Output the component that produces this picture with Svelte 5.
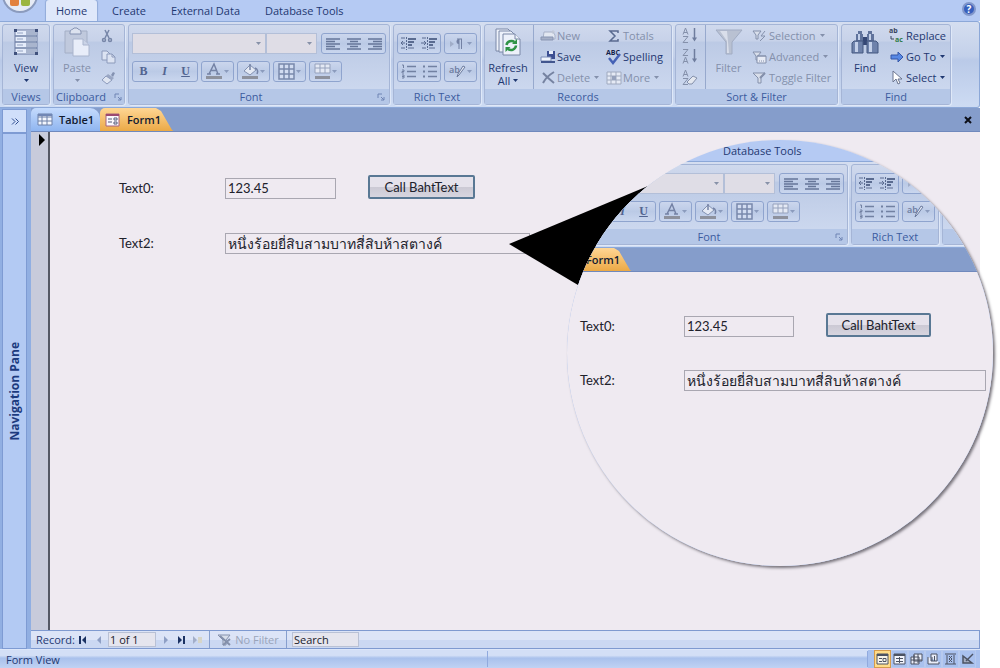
<script lang="ts">
	const ribbonTabs = ['Home', 'Create', 'External Data', 'Database Tools']
	const views = ['form', 'datasheet', 'pivot', 'chart', 'layout', 'design']

	let activeTab = $state('Home')
	let activeView = $state('form')
	let amount = $state('123.45')
	let bahtText = $state('หนึ่งร้อยยี่สิบสามบาทสี่สิบห้าสตางค์')
	let record = $state('1 of 1')
	let search = $state('Search')
</script>

{#snippet caret()}
	<svg class="caret" width="5" height="3" viewBox="0 0 5 3" aria-hidden="true"><path d="M0 0h5L2.5 3z" fill="currentColor" /></svg>
{/snippet}

{#snippet glyph(name: string)}
	{#if name === 'view'}
		<svg width="26" height="28" viewBox="0 0 26 28" fill="none">
			<path d="M2 2h22v24H2z" fill="#e6edfb" stroke="#6b7ba1" />
			<path d="M13 3h10v4H13zm0 6h10v4H13zm0 6h10v4H13zm0 6h10v4H13z" fill="#a9b5ce" />
			<path d="M2 8h22M2 14h22M2 20h22" stroke="#7182a8" stroke-width="1.5" />
			<path d="M4 5h6M4 11h6M4 17h6M4 23h6" stroke="#94a3c2" />
			<path d="M1 1h3v3H1zm21 0h3v3h-3zM1 24h3v3H1zm21 0h3v3h-3z" fill="#40517c" />
		</svg>
	{:else if name === 'paste'}
		<svg width="26" height="30" viewBox="0 0 26 30">
			<path d="M1 4h22v22H1z" fill="#c0c9dd" stroke="#a4afc6" />
			<path d="M6 5c0-3 3-2 4-4h3c1 2 4 1 4 4v2H6z" fill="#dce2ef" stroke="#8492b2" />
			<path d="M9 12h10l6 6v11H9z" fill="#e8edf9" stroke="#aab5ce" />
			<path d="M19 12v6h6" fill="#cbd4e7" stroke="#aab5ce" />
		</svg>
	{:else if name === 'cut'}
		<svg width="14" height="14" viewBox="0 0 14 14" fill="none" stroke="#7786a8" stroke-width="1.5">
			<path d="M5 1l4 8M9 1L5 9" /><circle cx="4" cy="11" r="1.5" /><circle cx="10" cy="11" r="1.5" />
		</svg>
	{:else if name === 'copy'}
		<svg width="16" height="14" viewBox="0 0 16 14" fill="#dce3f2" stroke="#8c9abb">
			<path d="M2 1h5l3 3v6H2z" /><path d="M7 4h5l3 3v6H7z" /><path d="M12 4v3h3" fill="none" />
		</svg>
	{:else if name === 'painter'}
		<svg width="16" height="14" viewBox="0 0 16 14">
			<path d="M11 4l2-3 2 1-2 4z" fill="#8492b2" /><path d="M8 3l6 4-2 2-6-4z" fill="#9aa7c4" /><path d="M6 5l6 4-5 4-5-4z" fill="#dfe5f1" stroke="#8c9abb" />
		</svg>
	{:else if name.startsWith('align')}
		<svg width="16" height="14" viewBox="0 0 16 14" stroke="#667699" stroke-width="1.5" fill="none">
			{#if name === 'align-left'}
				<path d="M1 2h14M1 4.5h9M1 7h14M1 9.5h9M1 12h14" />
			{:else if name === 'align-center'}
				<path d="M1 2h14M4 4.5h8M1 7h14M4 9.5h8M1 12h14" />
			{:else}
				<path d="M1 2h14M6 4.5h9M1 7h14M6 9.5h9M1 12h14" />
			{/if}
		</svg>
	{:else if name === 'outdent' || name === 'indent'}
		<svg width="17" height="15" viewBox="0 0 17 15" stroke="#5a6b90" fill="none">
			<path stroke-width="2" d="M8 3h8M8 6h6M8 9h4" /><path d="M8 12h6M1 2h4M1 12h4" />
			<path d="M6.5 1v13" stroke-dasharray="2 1" />
			<path d={name === 'outdent' ? 'M5 7H1M3 5L1 7l2 2' : 'M0 7h5M3 5l2 2-2 2'} />
		</svg>
	{:else if name === 'numbers' || name === 'bullets'}
		<svg width="16" height="15" viewBox="0 0 16 15" stroke="#7281a2" fill="none">
			<path stroke-width="1.5" d="M6 2.5h9M6 7.5h9M6 12.5h9" />
			{#if name === 'numbers'}
				<path d="M1 1h1.500v3M1 6h2v1.500H1V9h2M1 11h2v3H1M1 12.500h2" />
			{:else}
				<path stroke-width="2" d="M1 2.500h2M1 7.500h2M1 12.500h2" />
			{/if}
		</svg>
	{:else if name === 'paragraph'}
		<svg width="15" height="12" viewBox="0 0 15 12">
			<path d="M1 3l4 3-4 3z" fill="#a0adc8" /><path d="M8 1h5M10 1v10M12.500 1v10" stroke="#7381a4" /><path d="M10 1a2.500 2.500 0 000 5z" fill="#7381a4" />
		</svg>
	{:else if name === 'highlight'}
		<svg width="18" height="14" viewBox="0 0 18 14">
			<text x="0" y="8" font-size="9" font-weight="600" fill="#6c7b9e">ab</text><path d="M16 2l-6 8-2 2 1-3 5-8z" fill="#e3e9f5" stroke="#6c7b9e" />
		</svg>
	{:else if name === 'font-color'}
		<svg width="16" height="17" viewBox="0 0 16 17">
			<path d="M3 11L8 1l4 10M5 7.500h6M1 11h4M10 11h4" stroke="#7482a5" stroke-width="1.500" fill="none" /><path d="M0 13h16v3H0z" fill="#8d919d" />
		</svg>
	{:else if name === 'fill'}
		<svg width="17" height="17" viewBox="0 0 17 17">
			<path d="M8 2l6 5-6 5-6-4z" fill="#e4e9f4" stroke="#8391b0" /><path d="M8 7V1M13 5c3 1 3 4 2 6" stroke="#7482a5" stroke-width="1.500" fill="none" /><path d="M0 13h16v3H0z" fill="#8d919d" />
		</svg>
	{:else if name === 'grid'}
		<svg width="17" height="17" viewBox="0 0 17 17"><path d="M1 1h15v15H1zM6 1v15M11 1v15M1 6h15M1 11h15" stroke="#7989ac" stroke-width="1.500" fill="#d2dcf1" /></svg>
	{:else if name === 'alternate'}
		<svg width="17" height="17" viewBox="0 0 17 17"><path d="M1 1h15v9H1zM6 1v9M11 1v9M1 5h15" stroke="#96a2bd" fill="#e4e9f4" /><path d="M1 13h15v3H1z" fill="#8d919d" /></svg>
	{:else if name === 'refresh'}
		<svg width="26" height="30" viewBox="0 0 26 30" fill="#edf1fa" stroke="#7a88a7">
			<path d="M1 2h12l3 3v19H1z" /><path d="M4 4h12l4 4v17H4z" /><path d="M8 7h12l5 5v16H8z" /><path d="M20 7v5h5" />
			<g fill="none" stroke="#2f9346" stroke-width="2.500"><path d="M11.500 18a5 5 0 018-3" /><path d="M21 18.500a5 5 0 01-8 3.500" /></g>
			<path d="M22 12v5h-5zM10.500 25v-5h5z" fill="#2f9346" stroke="none" />
		</svg>
	{:else if name === 'new'}
		<svg width="16" height="13" viewBox="0 0 16 13"><path d="M4 3h9l2 3v4H3z" fill="#e2e7f1" stroke="#a7b1c7" /><path d="M1 8h12v3H1z" fill="#a6b0c7" stroke="#8794b2" /><path d="M13 1v4M11 3h4" stroke="#c0c7d6" /></svg>
	{:else if name === 'save'}
		<svg width="16" height="14" viewBox="0 0 16 14"><path d="M7 1h8v8H7z" fill="#3c4f92" /><path d="M9 1h4v3H9z" fill="#e8eefb" /><path d="M1 7h10v4H1z" fill="#f0f4fc" stroke="#7b8cb7" /><path d="M1 11h14v2H1z" fill="#42568e" /></svg>
	{:else if name === 'delete'}
		<svg width="16" height="14" viewBox="0 0 16 14"><path d="M3 2c3 3 6 6 11 10M14 1C9 4 5 8 3 12" stroke="#7683a1" stroke-width="2" fill="none" /></svg>
	{:else if name === 'totals'}
		<svg width="16" height="14" viewBox="0 0 16 14"><path d="M12 4V2H4l5 5-5 5h8v-2" stroke="#596a90" stroke-width="1.500" fill="none" /></svg>
	{:else if name === 'spelling'}
		<svg width="16" height="16" viewBox="0 0 16 16"><text x="0" y="6" font-size="7" font-weight="700" fill="#16234b">ABC</text><path d="M3 9l4 5 7-9" stroke="#4461b5" stroke-width="2.500" fill="none" /></svg>
	{:else if name === 'more'}
		<svg width="16" height="14" viewBox="0 0 16 14"><path d="M1 1h14v12H1zM5 1v12M10 1v12M1 5h14M1 9h14" stroke="#a0aabf" fill="#e5eaf5" /><path d="M6 5h4v4H6z" fill="#96a2bd" /></svg>
	{:else if name === 'sort-asc' || name === 'sort-desc' || name === 'clear-sort'}
		<svg width="16" height="17" viewBox="0 0 16 17" fill="none" stroke="#8490aa">
			<path d={name === 'sort-desc' ? 'M1 1.500h5L1 7.500h5M1 15.500L3.500 9 6 15.500M2 13.500h3' : 'M1 7.500L3.500 1 6 7.500M2 5.500h3M1 9.500h5l-5 6h5'} />
			{#if name === 'clear-sort'}
				<path d="M5 13l6-6 4 2-5 6H7z" fill="#e3e7ef" />
			{:else}
				<path d="M12.500 1v11" stroke="#6e7c9d" stroke-width="1.500" /><path d="M10 10.500h5l-2.500 4z" fill="#6e7c9d" stroke="none" />
			{/if}
		</svg>
	{:else if name === 'filter'}
		<svg width="28" height="28" viewBox="0 0 28 28"><path d="M1 2h26L17 14v12h-6V14z" fill="#b9c1d2" stroke="#a1acc3" /><path d="M5 3h7l2 22h-2V13z" fill="#d9deea" /></svg>
	{:else if name === 'selection' || name === 'advanced' || name === 'toggle' || name === 'no-filter'}
		<svg width="15" height="14" viewBox="0 0 15 14" stroke="#8490ab">
			{#if name === 'toggle' || name === 'no-filter'}
				<path d="M1 2h12L9 7v5H6V7z" fill="#d8deea" />
				{#if name === 'no-filter'}<path d="M3 3l10 9M13 6l-7 6" stroke-width="2" />{:else}<path d="M8 7l5-5" stroke-width="2" />{/if}
			{:else}
				<path d="M1 2h8L6 6v4H4V6z" fill="#d8deea" />
				{#if name === 'selection'}<path d="M13 2l-4 5h4l-5 5" fill="none" />{:else}<path d="M5 6h9v7H5z" fill="#e7ebf5" /><path d="M5 6h9M7 11h1m1 0h1m1 0h1" />{/if}
			{/if}
		</svg>
	{:else if name === 'find'}
		<svg width="28" height="26" viewBox="0 0 28 26">
			<path d="M7 2h4v3H7zm10 0h4v3h-4zM5 5h7v7H5zm11 0h7v7h-7z" fill="#60739c" /><path d="M12 8h4v8h-4z" fill="#344775" />
			<path d="M3 12h9v12H1V14zm13 0h9l2 2v10H16z" fill="#6e82ab" stroke="#445880" />
			<path d="M4 13h3v10H4zm14 0h3v10h-3zM7 5h2v6H7zm11 0h2v6h-2z" fill="#c3d0e9" />
		</svg>
	{:else if name === 'replace'}
		<svg width="16" height="15" viewBox="0 0 16 15"><text x="0" y="5" font-size="7" font-weight="700" fill="#38445f">ab</text><text x="6" y="14" font-size="7" font-weight="700" fill="#2d7a46">ac</text><path d="M2 8v3h3" stroke="#38445f" fill="none" /></svg>
	{:else if name === 'goto'}
		<svg width="16" height="12" viewBox="0 0 16 12"><path d="M2 4h7V1l5 5-5 5V8H2z" fill="#5788e4" stroke="#3457a8" /></svg>
	{:else if name === 'select'}
		<svg width="16" height="15" viewBox="0 0 16 15"><path d="M4 1v11l3-3 2 5 2-1-2-4h4z" fill="#fff" stroke="#6b7590" /></svg>
	{:else if name === 'launcher'}
		<svg width="8" height="8" viewBox="0 0 8 8" fill="none" stroke="#6f84b4"><path d="M1 5V1h4M4 4l3 3M7 4v3H4" /></svg>
	{:else if name === 'table'}
		<svg width="16" height="13" viewBox="0 0 16 13"><path d="M1 1h14v11H1zM5 1v11M10 1v11M1 4h14M1 8h14" fill="#f3f6fd" stroke="#6c80a8" /><path d="M1 1h14v2H1z" fill="#7187b5" /></svg>
	{:else if name === 'form-doc'}
		<svg width="15" height="14" viewBox="0 0 15 14"><path d="M1 1h13v12H1z" fill="#fbf8fb" stroke="#a7627f" /><path d="M1 1h13v2H1z" fill="#9c4870" /><path d="M3 6h4M3 9h4" stroke="#555b7b" /><path d="M9 5h3v2H9zm0 4h3v2H9z" fill="#fff" stroke="#555b7b" /></svg>
	{:else if name === 'help'}
		<svg width="14" height="14" viewBox="0 0 14 14"><circle cx="7" cy="7" r="6" fill="#375fbd" stroke="#8297ca" stroke-width="2" /><text x="7" y="11" font-size="10" font-weight="700" text-anchor="middle" fill="#fff">?</text></svg>
	{:else if name === 'first' || name === 'last'}
		<svg width="8" height="8" viewBox="0 0 8 8" fill="#1b3263"><path d={name === 'first' ? 'M0 0h2v8H0zM7 0v8L3 4z' : 'M6 0h2v8H6zM1 0v8l4-4z'} /></svg>
	{:else if name === 'prev' || name === 'next'}
		<svg width="5" height="8" viewBox="0 0 5 8" fill="#8e9fc5"><path d={name === 'prev' ? 'M4 0v8L0 4z' : 'M1 0v8l4-4z'} /></svg>
	{:else if name === 'new-record'}
		<svg width="9" height="8" viewBox="0 0 9 8"><path d="M0 0v8l4-4z" fill="#a2aec9" /><path d="M5 1h4v6H5z" fill="#d6d5c8" /></svg>
	{:else}
		<svg width="13" height="12" viewBox="0 0 13 12" fill="none" stroke="#4c5363">
			{#if name === 'form'}
				<path d="M1 1h11v10H1z" fill="#f8f4e9" /><path d="M1 2h11" stroke-width="2" /><path d="M3 5.500h3M3 8.500h3M7 5.500h3v3H7z" />
			{:else if name === 'datasheet'}
				<path d="M1 1h11v10H1z" fill="#f1f4fc" /><path d="M1 2h11" stroke-width="2" /><path d="M3 5.500h7M3 8.500h7M6.500 4v6" />
			{:else if name === 'pivot'}
				<path d="M4 1h8v7H4zM1 4h8v7H1z" fill="#e9edf8" /><path d="M4 2v9M1 7h11M8 1v9" />
			{:else if name === 'chart'}
				<path d="M4 1h6v7H4zM1 4v7h11V9" fill="#e9edf8" /><path d="M5 8V4M7.500 8V3" />
			{:else if name === 'layout'}
				<path d="M1 1h11M1 11h11M3 2v9M10 2v9M5 3l3 3-3 3M8 3L5 6l3 3" />
			{:else}
				<path d="M2 3v7h9z" fill="#a4adc2" stroke-width="1.500" /><path d="M5 8l7-7" stroke-width="1.500" />
			{/if}
		</svg>
	{/if}
{/snippet}

{#snippet command(icon: string, label: string, menu = false, disabled = false)}
	<button class="command" type="button" {disabled}>
		<span class="icon">{@render glyph(icon)}</span>
		{label}
		{#if menu}{@render caret()}{/if}
	</button>
{/snippet}

{#snippet tool(icon: string, label: string)}
	<button class="split" type="button" aria-label={label}>
		{@render glyph(icon)}
		{@render caret()}
	</button>
{/snippet}

{#snippet tabBar()}
	<nav class="tabs" aria-label="Ribbon">
		<button class="office" type="button" aria-label="Office menu"><span></span><span></span><span></span><span></span></button>
		{#each ribbonTabs as tab (tab)}
			<button class="tab" class:active={tab === activeTab} type="button" onclick={() => (activeTab = tab)}>{tab}</button>
		{/each}
		<button class="help" type="button" aria-label="Help">{@render glyph('help')}</button>
	</nav>
{/snippet}

{#snippet textGroups()}
	<section class="group font">
		<div class="body rows">
			<div class="row">
				<div class="combos">
					<div class="combo family"><select aria-label="Font"><option></option></select>{@render caret()}</div>
					<div class="combo size"><select aria-label="Font size"><option></option></select>{@render caret()}</div>
				</div>
				<div class="set">
					<button type="button" aria-label="Align left">{@render glyph('align-left')}</button>
					<button type="button" aria-label="Center">{@render glyph('align-center')}</button>
					<button type="button" aria-label="Align right">{@render glyph('align-right')}</button>
				</div>
			</div>
			<div class="row">
				<div class="set letters">
					<button type="button"><b>B</b></button>
					<button type="button"><i>I</i></button>
					<button type="button"><u>U</u></button>
				</div>
				{@render tool('font-color', 'Font color')}
				{@render tool('fill', 'Fill color')}
				{@render tool('grid', 'Gridlines')}
				{@render tool('alternate', 'Alternate row color')}
			</div>
		</div>
		<h2>Font <span class="launcher">{@render glyph('launcher')}</span></h2>
	</section>
	<section class="group rich">
		<div class="body rows">
			<div class="row">
				<div class="set">
					<button type="button" aria-label="Decrease list level">{@render glyph('outdent')}</button>
					<button type="button" aria-label="Increase list level">{@render glyph('indent')}</button>
				</div>
				{@render tool('paragraph', 'Text direction')}
			</div>
			<div class="row">
				<div class="set">
					<button type="button" aria-label="Numbering">{@render glyph('numbers')}</button>
					<button type="button" aria-label="Bullets">{@render glyph('bullets')}</button>
				</div>
				{@render tool('highlight', 'Highlight color')}
			</div>
		</div>
		<h2>Rich Text</h2>
	</section>
{/snippet}

{#snippet documentArea(prefix: string)}
	<div class="doc-tabs">
		<button class="doc-tab" type="button">{@render glyph('table')} Table1</button>
		<button class="doc-tab current" type="button">{@render glyph('form-doc')} Form1</button>
		<button class="close" type="button" aria-label="Close">
			<svg width="8" height="8" viewBox="0 0 8 8"><path d="M1 1l6 6M7 1L1 7" stroke="#0c0f18" stroke-width="2" /></svg>
		</button>
	</div>
	<div class="sheet">
		<div class="selector"><svg width="7" height="12" viewBox="0 0 7 12"><path d="M1 0l6 6-6 6z" fill="#000" /></svg></div>
		<form class="form" onsubmit={(e) => e.preventDefault()}>
			<label for="{prefix}-text0">Text0:</label>
			<input id="{prefix}-text0" bind:value={amount} />
			<button class="call" type="submit">Call BahtText</button>
			<label for="{prefix}-text2">Text2:</label>
			<input class="wide" id="{prefix}-text2" bind:value={bahtText} />
		</form>
	</div>
{/snippet}

<div class="page">
	<div class="window">
		{@render tabBar()}
		<div class="ribbon">
			<section class="group views">
				<div class="body">
					<button class="big" type="button">{@render glyph('view')}<span>View</span>{@render caret()}</button>
				</div>
				<h2>Views</h2>
			</section>
			<section class="group clipboard">
				<div class="body">
					<button class="big" type="button" disabled>{@render glyph('paste')}<span>Paste</span>{@render caret()}</button>
					<div class="stack">
						<button class="mini" type="button" aria-label="Cut">{@render glyph('cut')}</button>
						<button class="mini" type="button" aria-label="Copy">{@render glyph('copy')}</button>
						<button class="mini" type="button" aria-label="Format Painter">{@render glyph('painter')}</button>
					</div>
				</div>
				<h2>Clipboard <span class="launcher">{@render glyph('launcher')}</span></h2>
			</section>
			{@render textGroups()}
			<section class="group records">
				<div class="body">
					<button class="big" type="button">{@render glyph('refresh')}<span>Refresh</span><span>All {@render caret()}</span></button>
					<div class="stack divided">
						{@render command('new', 'New', false, true)}
						{@render command('save', 'Save')}
						{@render command('delete', 'Delete', true, true)}
					</div>
					<div class="stack">
						{@render command('totals', 'Totals', false, true)}
						{@render command('spelling', 'Spelling')}
						{@render command('more', 'More', true, true)}
					</div>
				</div>
				<h2>Records</h2>
			</section>
			<section class="group sort">
				<div class="body">
					<div class="stack">
						<button class="mini" type="button" aria-label="Ascending">{@render glyph('sort-asc')}</button>
						<button class="mini" type="button" aria-label="Descending">{@render glyph('sort-desc')}</button>
						<button class="mini" type="button" aria-label="Clear all sorts">{@render glyph('clear-sort')}</button>
					</div>
					<button class="big divided" type="button" disabled>{@render glyph('filter')}<span>Filter</span></button>
					<div class="stack">
						{@render command('selection', 'Selection', true, true)}
						{@render command('advanced', 'Advanced', true, true)}
						{@render command('toggle', 'Toggle Filter', false, true)}
					</div>
				</div>
				<h2>Sort &amp; Filter</h2>
			</section>
			<section class="group find">
				<div class="body">
					<button class="big" type="button">{@render glyph('find')}<span>Find</span></button>
					<div class="stack">
						{@render command('replace', 'Replace')}
						{@render command('goto', 'Go To', true)}
						{@render command('select', 'Select', true)}
					</div>
				</div>
				<h2>Find</h2>
			</section>
		</div>
		<div class="workspace">
			<aside class="nav-pane">
				<button class="expand" type="button" aria-label="Open navigation pane">
					<svg width="8" height="7" viewBox="0 0 8 7" fill="none" stroke="#2e4c8f"><path d="M1 0.500l3 3-3 3M4.500 0.500l3 3-3 3" /></svg>
				</button>
				<div class="nav-title"><span>Navigation Pane</span></div>
			</aside>
			<main>
				{@render documentArea('main')}
				<div class="record-bar">
					<label for="record">Record:</label>
					<button type="button" aria-label="First record">{@render glyph('first')}</button>
					<button type="button" aria-label="Previous record">{@render glyph('prev')}</button>
					<input id="record" class="position" bind:value={record} />
					<button type="button" aria-label="Next record">{@render glyph('next')}</button>
					<button type="button" aria-label="Last record">{@render glyph('last')}</button>
					<button type="button" aria-label="New record">{@render glyph('new-record')}</button>
					<button class="no-filter" type="button" disabled>{@render glyph('no-filter')} No Filter</button>
					<input class="search" aria-label="Search" bind:value={search} />
				</div>
			</main>
		</div>
		<footer>
			<span class="status">Form View</span>
			<span class="status-space"></span>
			<div class="view-switch">
				{#each views as view (view)}
					<button class:on={view === activeView} type="button" aria-label={view} onclick={() => (activeView = view)}>{@render glyph(view)}</button>
				{/each}
			</div>
		</footer>
	</div>

	<svg class="pointer" width="140" height="100" viewBox="0 0 140 100" aria-hidden="true"><path d="M0 58L139 0 100 80 69 99z" /></svg>
	<div class="lens" inert>
		<div class="lens-view">
			<nav class="tabs"><button class="tab" type="button">Database Tools</button></nav>
			<div class="ribbon">
				{@render textGroups()}
				<section class="group records"><div class="body"></div><h2></h2></section>
			</div>
			<div class="workspace">
				<main>{@render documentArea('lens')}</main>
			</div>
		</div>
	</div>
</div>

<style>
	:global(body) {
		margin: 0;
		background: #fff;
	}
	.page {
		position: relative;
		min-height: 100vh;
		padding-right: 20px;
		box-sizing: border-box;
		overflow: hidden;
		font: 11px/13px 'Open Sans', 'Noto Sans', sans-serif;
		color: #1f3871;
	}
	.page :where(*) {
		box-sizing: border-box;
	}
	svg {
		display: block;
		flex: none;
		overflow: visible;
	}
	button {
		display: flex;
		align-items: center;
		padding: 0;
		border: 0;
		background: none;
		font: inherit;
		color: inherit;
		white-space: nowrap;
	}
	input,
	select {
		min-width: 0;
		font: inherit;
	}
	.window {
		display: flex;
		flex-direction: column;
		height: 100vh;
	}
	.tabs {
		display: flex;
		flex: none;
		height: 21px;
		background: #b5caf3;
		overflow: hidden;
	}
	.office {
		display: grid;
		grid-template-columns: 9px 9px;
		grid-template-rows: 9px 9px;
		align-items: stretch;
		place-content: end center;
		gap: 2px;
		width: 36px;
		height: 36px;
		margin: -23px 8px 0 2px;
		padding-bottom: 5px;
		border: 2px solid #8b9bbd;
		border-radius: 50%;
		background: #e6ebf5;
	}
	.office span {
		border-radius: 2px;
		background: #e77b37;
	}
	.office span:nth-child(2) {
		background: #6cac43;
	}
	.office span:nth-child(3) {
		background: #e2813c;
	}
	.office span:nth-child(4) {
		background: #9bb53f;
	}
	.tab {
		height: 21px;
		margin-right: 5px;
		padding: 0 10px;
		border-radius: 3px 3px 0 0;
	}
	.tab.active {
		background: #dfe8fa;
		box-shadow: 0 0 1px 1px #92abd9;
	}
	.help {
		margin: -3px 4px 0 auto;
	}
	.ribbon {
		display: flex;
		flex: none;
		gap: 3px;
		height: 87px;
		padding: 2px 2px 3px;
		border: 1px solid #8ca8d8;
		border-width: 1px 1px 1px 0;
		border-radius: 0 3px 3px 0;
		background: linear-gradient(#d5def0, #c4d1ea 40%, #bacae8 45%, #cddbf3);
	}
	.group {
		display: flex;
		flex-direction: column;
		flex: none;
		height: 81px;
		border: 1px solid #a5b5d6;
		border-radius: 3px;
		background: linear-gradient(#cfd9ed, #c7d2e9 20%, #bccae5 22%, #cbd7ee 80%);
		box-shadow: 1px 1px 0 #dfe8f8;
	}
	.views {
		width: 48px;
	}
	.clipboard {
		width: 72px;
	}
	.font {
		width: 262px;
	}
	.rich {
		width: 88px;
	}
	.records {
		width: 188px;
	}
	.sort {
		width: 163px;
	}
	.find {
		width: 110px;
	}
	.group h2 {
		display: flex;
		align-items: center;
		justify-content: center;
		height: 15px;
		margin: 0;
		background: #b5c7e7;
		font-size: 11px;
		font-weight: 400;
		color: #3c5c9f;
	}
	.launcher {
		margin-left: 8px;
	}
	.font h2::before {
		content: '';
		flex: 1;
	}
	.font .launcher {
		display: flex;
		flex: 1;
		justify-content: flex-end;
		margin: 0 4px 0 12px;
	}
	.body {
		display: flex;
		height: 64px;
	}
	.rows {
		flex-direction: column;
		gap: 7px;
		padding: 8px 3px 0;
	}
	.row {
		display: flex;
		gap: 3px;
	}
	.big {
		flex-direction: column;
		width: 46px;
		padding-top: 2px;
	}
	.big > svg:first-child {
		height: 30px;
		margin-bottom: 4px;
	}
	.big > span {
		display: flex;
		align-items: center;
		gap: 3px;
		height: 13px;
	}
	.big > .caret {
		margin-top: 5px;
	}
	.big:disabled,
	.command:disabled {
		color: #8490ab;
	}
	.stack {
		display: flex;
		flex-direction: column;
	}
	.mini,
	.command {
		height: 21px;
	}
	.icon {
		display: flex;
		justify-content: center;
		width: 17px;
		margin-right: 1px;
	}
	.command .caret {
		margin-left: 4px;
	}
	.divided {
		border-left: 1px solid #97a9cd;
	}
	.stack.divided {
		width: 72px;
		margin-left: 2px;
		padding-left: 5px;
	}
	.sort .stack:first-child {
		padding: 0 7px 0 6px;
	}
	.combos {
		display: flex;
		margin-right: 1px;
	}
	.combo {
		display: flex;
		align-items: center;
		height: 21px;
		padding-right: 4px;
		border: 1px solid #b3bfd8;
		background: #dfdde6;
		color: #8791a8;
	}
	.combo select {
		flex: 1;
		border: 0;
		background: none;
		appearance: none;
	}
	.family {
		width: 134px;
	}
	.size {
		width: 51px;
	}
	.set,
	.split {
		height: 21px;
		border: 1px solid #8fa4ce;
		border-radius: 3px;
		background: linear-gradient(#cbd6ed, #bbcae6 50%, #c9d6ee);
	}
	.set {
		display: flex;
	}
	.set button {
		justify-content: center;
		width: 21px;
	}
	.letters {
		width: 66px;
		font: 700 12px/15px 'Liberation Serif', serif;
		color: #526490;
	}
	.split {
		justify-content: space-between;
		width: 33px;
		padding: 0 4px;
		color: #8b9bbd;
	}
	.doc-tabs {
		display: flex;
		flex: none;
		height: 24px;
		background: #859dcb;
		border-bottom: 1px solid #7089bd;
	}
	.doc-tab {
		gap: 6px;
		width: 69px;
		padding-left: 6px;
		border-radius: 5px 10px 0 0;
		background: linear-gradient(#c5dbfd, #8fb5f0);
		font-weight: 600;
		color: #111a30;
	}
	.doc-tab.current {
		gap: 7px;
		width: 75px;
		padding-left: 5px;
		background: linear-gradient(#ffd694, #eba946);
		clip-path: polygon(0 0, 56px 0, 61px 3px, 72px 22px, 75px 24px, 0 24px);
	}
	.close {
		margin: 0 8px 0 auto;
	}
	.workspace {
		display: flex;
		flex: 1;
		min-height: 0;
		background: #98b5e8;
	}
	.nav-pane {
		display: flex;
		flex-direction: column;
		flex: none;
		width: 31px;
		padding: 1px 4px 0 2px;
		background: #91afe2;
	}
	.expand {
		justify-content: center;
		height: 24px;
		border: 1px solid #7e9bd3;
		background: #d0dffa;
	}
	.nav-title {
		display: flex;
		align-items: center;
		justify-content: center;
		flex: 1;
		border: 1px solid #7e9bd3;
		background: #b3caf3;
	}
	.nav-title span {
		writing-mode: vertical-rl;
		transform: rotate(180deg);
		font-size: 12px;
		font-weight: 700;
		color: #1c3b7e;
	}
	main {
		display: flex;
		flex-direction: column;
		flex: 1;
		min-width: 0;
	}
	.sheet {
		display: flex;
		flex: 1;
		background: #efeaf1;
	}
	.selector {
		width: 19px;
		padding: 2px 0 0 7px;
		border-right: 2px solid #555864;
		background: #c8cbdb;
	}
	.form {
		display: grid;
		grid-template-columns: 106px 111px 194px;
		grid-template-rows: 24px 21px;
		row-gap: 34px;
		align-items: end;
		align-content: start;
		padding: 43px 0 0 69px;
		font: 13px/21px Lato, 'Noto Sans', sans-serif;
		color: #20212b;
	}
	.form input {
		height: 21px;
		padding: 0 2px;
		border: 1px solid #a9a7b1;
		background: none;
		color: inherit;
	}
	.form .wide {
		grid-column: 2 / 4;
		font-size: 14px;
		line-height: 19px;
	}
	.call {
		justify-content: center;
		height: 24px;
		margin: 0 55px 0 32px;
		border: 2px solid #597894;
		border-radius: 2px;
		background: linear-gradient(#e5e2eb 50%, #cbc9d4 50%, #d7d5df);
	}
	.record-bar {
		display: flex;
		align-items: center;
		flex: none;
		height: 19px;
		padding-left: 5px;
		border: 1px solid #7f9ad0;
		border-width: 1px 1px 1px 0;
		background: linear-gradient(#dce4f7 50%, #cbd8f2 50%);
	}
	.record-bar button {
		justify-content: center;
		width: 14px;
		margin-right: 2px;
	}
	.record-bar label {
		width: 40px;
	}
	.record-bar input {
		height: 15px;
		padding: 0 1px;
		border: 1px solid #b9c1d5;
		background: #e5e5ee;
		color: #20212b;
	}
	.record-bar .position {
		width: 48px;
		margin-right: 2px;
	}
	.record-bar .no-filter {
		gap: 3px;
		width: 78px;
		height: 17px;
		margin: 0 5px 0 3px;
		border: 1px solid #879fce;
		border-width: 0 1px;
		color: #9aa4ba;
	}
	.record-bar .search {
		width: 67px;
	}
	footer {
		display: flex;
		align-items: center;
		flex: none;
		height: 19px;
		border-top: 1px solid #dce6f9;
		background: linear-gradient(#d3dff6 30%, #a9c1ec 45%, #c0d2f3);
	}
	.status {
		flex: 1;
		padding-left: 6px;
	}
	.status-space {
		width: 381px;
		height: 16px;
		border: 1px solid #91aade;
		border-width: 0 1px;
	}
	.view-switch {
		display: flex;
		width: 112px;
		padding-left: 6px;
		background: #a9c1ee;
	}
	.view-switch button {
		justify-content: center;
		width: 17px;
		height: 18px;
		border: 1px solid #b7caee;
	}
	.view-switch .on {
		border-color: #d69b4c;
		background: #ffdc89;
	}
	.pointer {
		position: absolute;
		top: 186px;
		left: 509px;
	}
	/* round magnifier laid over the form */
	.lens {
		position: absolute;
		top: 140px;
		left: 567px;
		width: 426px;
		height: 426px;
		border-radius: 50%;
		background: #efeaf1;
		box-shadow: 2px 2px 3px #77737b;
		overflow: hidden;
	}
	.lens-view {
		display: flex;
		flex-direction: column;
		height: 426px;
	}
	.lens .tabs {
		padding-left: 146px;
	}
	.lens .ribbon {
		padding-left: 19px;
	}
	/* the lens cuts through the tab strip right before the Form1 label */
	.lens .doc-tab:first-child,
	.lens .selector,
	.lens .close {
		display: none;
	}
	.lens .doc-tab.current {
		width: 66px;
		padding-left: 0;
		gap: 4px;
		clip-path: polygon(0 0, 47px 0, 52px 3px, 63px 22px, 66px 24px, 0 24px);
	}
	.lens .form {
		grid-template-columns: 104px 110px 192px;
		row-gap: 33px;
		padding: 41px 0 0 13px;
	}
</style>
